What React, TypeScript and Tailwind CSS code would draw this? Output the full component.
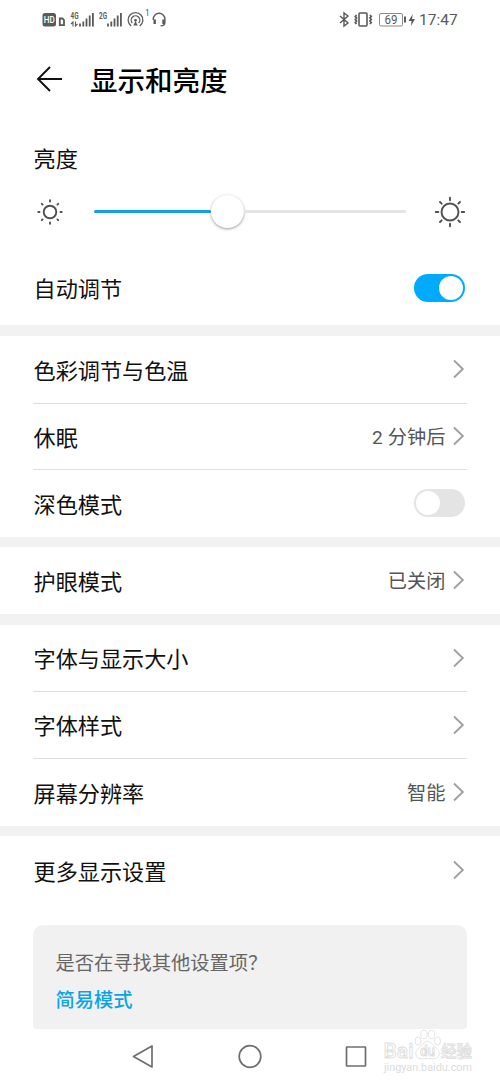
import type { ReactNode } from 'react';

function StatusBar() {
  return (
    <div className="flex h-10 items-center text-[#5a5a5a]">
      <svg className="h-10 w-[330px]" viewBox="0 0 330 40" fill="none" stroke="currentColor">
        <rect x="42.5" y="13" width="13.5" height="13.500" rx="2.5" fill="currentColor" stroke="none" />
        <text x="43.800" y="23.200" fontSize="9.500" fontWeight="500" fill="#fff" stroke="none" textLength="11" lengthAdjust="spacingAndGlyphs">HD</text>
        <path d="M59.800 18.500h2.700l1.500 1.500v5.200h-4.200z" strokeWidth="1.800" />
        <text x="70.500" y="18.800" fontSize="9.500" fontWeight="700" fill="currentColor" stroke="none" textLength="8" lengthAdjust="spacingAndGlyphs">4G</text>
        <path d="M73 26.500v-4.500l-2 2M75.500 21.500v4.500l2-2" strokeWidth="1.100" />
        <path d="M80 26.500v-3M83.300 26.500v-5M86.500 26.500v-8M89.700 26.500v-11M92.900 26.500v-13.500" strokeWidth="1.800" />
        <text x="99" y="18.800" fontSize="9.500" fontWeight="700" fill="currentColor" stroke="none" textLength="8" lengthAdjust="spacingAndGlyphs">2G</text>
        <path d="M108 26.500v-3M111.300 26.500v-5M114.500 26.500v-8M117.700 26.500v-11M120.900 26.500v-13.500" strokeWidth="1.800" />
        <path d="M131.200 26a7.400 7.400 0 1 1 8.600 0M132.300 23a4.300 4.300 0 1 1 6.400 0" strokeWidth="1.300" />
        <circle cx="135.500" cy="20.300" r="1.400" fill="currentColor" stroke="none" />
        <path d="M135.500 21l2.200 4.500h-4.400z" fill="currentColor" stroke="none" />
        <text x="145" y="16" fontSize="8.500" fill="currentColor" stroke="none">1</text>
        <path d="M153.300 20v-1a5.800 5.800 0 0 1 11.600 0v3.500c0 2.200-1.500 3.400-4.400 3.400" strokeWidth="1.400" />
        <path d="M154.700 19.500v4.500M163.500 19.500v4.500" strokeWidth="2.400" />
      </svg>
      <svg className="h-10 w-[88px]" viewBox="330 0 88 40" fill="none" stroke="currentColor">
        <path d="M340 16l8 7-4 3V13l4 3-8 7" strokeWidth="1.400" />
        <rect x="359" y="13" width="8" height="13" rx="1" strokeWidth="1.600" />
        <path d="M356.500 15l-1.200 1.500 1.200 1.500-1.200 1.500 1.200 1.500-1.200 1.500 1.200 1.500M370 15l1.200 1.500-1.200 1.500 1.200 1.500-1.200 1.500 1.200 1.500-1.200 1.500" strokeWidth="1.800" />
        <rect x="379.500" y="13.500" width="23" height="12.500" rx="1.500" stroke="#8a8a8a" strokeWidth="1" />
        <path d="M405 16.500v6" strokeWidth="2" />
        <text x="384.500" y="24.300" fontSize="12.500" fill="currentColor" stroke="none" textLength="13" lengthAdjust="spacingAndGlyphs">69</text>
        <path d="M412.800 14l-4.300 7h3l-.5 5 4-7h-3z" fill="currentColor" stroke="none" />
      </svg>
      <span className="mt-0.5 ml-px font-[Roboto] text-[15.500px]">17:47</span>
    </div>
  );
}

function Sun({ large }: { large?: boolean }) {
  return (
    <svg className="size-8" viewBox="-16 -16 32 32" fill="none" stroke="#505050" strokeWidth="1.900" strokeLinecap="round">
      {large ? (
        <>
          <circle r="8.500" />
          <path d="M0-14.200v2.500M0 14.200v-2.500M-14.200 0h2.500M14.200 0h-2.500M-10-10l1.700 1.700M10-10l-1.700 1.700M-10 10l1.700-1.700M10 10l-1.700-1.700" />
        </>
      ) : (
        <>
          <circle r="6.300" />
          <path d="M0-11.700v1.200M0 11.700v-1.200M-11.700 0h1.200M11.700 0h-1.200M-8.200-8.200l.8.800M8.200-8.200l-.8.800M-8.200 8.200l.8-.8M8.200 8.200l-.8-.8" />
        </>
      )}
    </svg>
  );
}

function Toggle({ on }: { on?: boolean }) {
  return (
    <div className={`flex h-7 w-[51px] items-center rounded-full px-[2px] ${on ? 'justify-end bg-[#00aaff]' : 'mb-[2px] bg-[#e4e4e4]'}`}>
      <div className="size-6 rounded-full bg-white" />
    </div>
  );
}

function Chevron() {
  return (
    <svg className="mb-px ml-2 h-5 w-3" viewBox="0 0 12 20" fill="none" stroke="#a0a0a0" strokeWidth="1.900">
      <path d="M1 1.500L9.800 10 1 18.500" />
    </svg>
  );
}

function Row({ label, value, line, control, className = 'h-[67px]' }: { label: string; value?: string; line?: boolean; control?: ReactNode; className?: string }) {
  return (
    <div className={`mx-[33px] flex items-center justify-between ${line ? 'border-b border-[#dedede]' : ''} ${className}`}>
      <span className="pt-[2px] pl-[0.500px] text-[22.150px] leading-8">{label}</span>
      {control ?? (
        <div className="flex items-center pr-[2px]">
          <span className="-mr-[0.500px] pt-[2px] text-[19.200px] leading-7 tracking-[0.100px] text-[#555]">{value}</span>
          <Chevron />
        </div>
      )}
    </div>
  );
}

function Watermark() {
  return (
    <div className="absolute top-[1027px] left-[383px] h-12 w-[92px]">
      <svg className="h-12 w-[92px]" viewBox="0 0 92 48" fill="#fff" stroke="#dcdcdc" strokeWidth="0.800">
        <ellipse cx="35" cy="14" rx="3" ry="4" />
        <ellipse cx="41" cy="7.500" rx="3.200" ry="4.300" />
        <ellipse cx="48.500" cy="7.500" rx="3.200" ry="4.300" />
        <ellipse cx="54.500" cy="14" rx="3" ry="4" />
        <path d="M44.500 14c-3 0-4.500 3-7 5.500-3 2.500-5.500 5-4.500 8.500 1.500 5 7 3.500 11.500 3.500s10 1.500 11.500-3.500c1-3.500-1.500-6-4.500-8.500-2.500-2.500-4-5.500-7-5.500z" />
        <text x="0.500" y="31" fontSize="20" fontWeight="500" textLength="30" lengthAdjust="spacingAndGlyphs">Bai</text>
        <text x="37" y="29" fontSize="14" fontWeight="500" textLength="15" lengthAdjust="spacingAndGlyphs">du</text>
        <text x="58" y="30" fontSize="16" fontWeight="500" textLength="31" lengthAdjust="spacingAndGlyphs">经验</text>
        <text x="1" y="43.500" fontSize="10" fill="#dcdcdc" stroke="none" textLength="88" lengthAdjust="spacingAndGlyphs">jingyan.baidu.com</text>
      </svg>
    </div>
  );
}

export default function App() {
  return (
    <div className="relative flex h-[1084px] w-[500px] flex-col overflow-hidden bg-white font-[Roboto,'Noto_Sans_CJK_SC',sans-serif] text-[#111]">
      <StatusBar />

      <header className="flex h-20 items-center pl-9">
        <svg className="mb-[3px] h-7 w-[26px]" viewBox="0 0 26 28" fill="none" stroke="#111" strokeWidth="1.900">
          <path d="M26 14H2M14 2L2 14l12 12" />
        </svg>
        <h1 className="ml-7 pt-[3px] text-[27.500px] leading-10 font-medium text-black">显示和亮度</h1>
      </header>

      <div className="mt-[23px] h-8 pl-[33.500px] text-[22.150px] leading-8">亮度</div>

      <div className="flex h-[73px] items-center pl-[34px]">
        <Sun />
        <div className="mr-7 ml-7 flex w-[312px] items-center">
          <div className="h-[3px] w-[116.500px] rounded-full bg-[#12a0e3]" />
          <div className="size-[33px] rounded-full bg-white shadow-[0_1px_3px_rgba(0,0,0,0.4)]" />
          <div className="h-[3px] flex-1 rounded-full bg-[#e4e4e4]" />
        </div>
        <Sun large />
      </div>

      <Row className="h-[77px] pt-[2px] pr-[2px]" label="自动调节" control={<Toggle on />} />
      <div className="h-[11px] bg-[#f2f2f2]" />

      <Row className="h-[68px]" label="色彩调节与色温" line />
      <Row className="h-[66px]" label="休眠" value="2 分钟后" line />
      <Row className="h-[67px] pr-[2px]" label="深色模式" control={<Toggle />} />
      <div className="h-2.5 bg-[#f2f2f2]" />

      <Row label="护眼模式" value="已关闭" />
      <div className="h-[11px] bg-[#f2f2f2]" />

      <Row label="字体与显示大小" line />
      <Row label="字体样式" line />
      <Row label="屏幕分辨率" value="智能" />
      <div className="h-2.5 bg-[#f2f2f2]" />

      <Row className="h-[69px]" label="更多显示设置" />

      <div className="mx-[33px] mt-5 flex h-[104px] flex-col rounded-t-[10px] rounded-b-[4px] bg-[#f1f1f1] px-[22.500px] pt-[25px]">
        <span className="text-[19.250px] leading-7 text-[#666]">是否在寻找其他设置项？</span>
        <span className="mt-[9px] text-[19.250px] leading-7 font-medium text-[#08a5e6]">简易模式</span>
      </div>

      <nav className="flex h-[55px] items-center">
        <svg className="h-[55px] w-[500px]" viewBox="0 0 500 55" fill="none" stroke="#6e6e6e" strokeWidth="1.700" strokeLinejoin="round">
          <path d="M152 17v21l-18.500-10.500z" />
          <circle cx="250" cy="27.500" r="10.800" />
          <rect x="346.500" y="18" width="19" height="19" rx="0.500" />
        </svg>
      </nav>

      <Watermark />
    </div>
  );
}
